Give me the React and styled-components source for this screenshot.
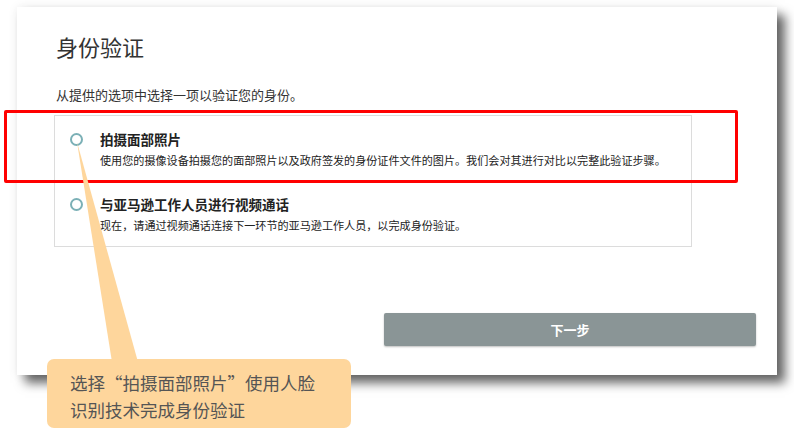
import styled, { createGlobalStyle } from 'styled-components';

const GlobalStyle = createGlobalStyle`
  html, body {
    margin: 0;
    padding: 0;
    background: #ffffff;
  }
  body {
    font-family: "Noto Sans CJK SC", "Noto Sans", "Liberation Sans", sans-serif;
    color: #333333;
  }
`;

const Stage = styled.div`
  position: relative;
  width: 794px;
  height: 441px;
  padding: 7px 0 0 17px;
  box-sizing: border-box;
  overflow: hidden;
`;

const Card = styled.div`
  width: 760px;
  height: 368px;
  box-sizing: border-box;
  background: #ffffff;
  padding: 24px 21px 0 37px;
  display: flex;
  flex-direction: column;
  box-shadow: 8px 8px 10px rgba(0, 0, 0, 0.6), 0 0 10px rgba(0, 0, 0, 0.07);
`;

const Title = styled.h1`
  margin: 0 0 0 2px;
  font-size: 22px;
  line-height: 30px;
  font-weight: 400;
  color: #333333;
`;

const Subtitle = styled.p`
  margin: 24px 0 0 2px;
  font-size: 13px;
  line-height: 20px;
  color: #333333;
`;

const OptionList = styled.div`
  margin-top: 10px;
  width: 638px;
  border: 1px solid #dcdcdc;
  box-sizing: border-box;
  display: flex;
  flex-direction: column;
`;

const Option = styled.label`
  display: flex;
  align-items: flex-start;
  gap: 17px;
  padding: 13px 16px 13px 15px;
  cursor: pointer;
`;

const Radio = styled.span`
  flex-shrink: 0;
  width: 13px;
  height: 13px;
  margin-top: 4px;
  border: 2px solid #7bb0b6;
  border-radius: 50%;
  box-sizing: border-box;
  background: #ffffff;
`;

const OptionText = styled.div`
  display: flex;
  flex-direction: column;
  gap: 3px;
`;

const OptionTitle = styled.div`
  font-size: 13.5px;
  line-height: 20px;
  font-weight: 700;
  color: #222222;
`;

const OptionDesc = styled.div`
  font-size: 11.1px;
  line-height: 16px;
  color: #222222;
`;

const NextButton = styled.button`
  align-self: flex-end;
  margin-top: 66px;
  width: 372px;
  height: 33px;
  border: none;
  border-radius: 2px;
  background: #8a9596;
  color: #ffffff;
  font-family: inherit;
  font-size: 13px;
  font-weight: 700;
  box-shadow: 0 1px 2px rgba(0, 0, 0, 0.25);
`;

const Highlight = styled.div`
  position: absolute;
  left: 4px;
  top: 110px;
  width: 734px;
  height: 73px;
  border: 3px solid #ff0000;
  border-radius: 2px;
  box-sizing: border-box;
  pointer-events: none;
`;

const Pointer = styled.svg`
  position: absolute;
  left: 0;
  top: 0;
  pointer-events: none;
`;

const Callout = styled.div`
  position: absolute;
  left: 47px;
  top: 359px;
  width: 304px;
  height: 69px;
  box-sizing: border-box;
  padding: 10px 0 0 23px;
  background: #fed69c;
  border-radius: 7px;
  font-size: 17.5px;
  line-height: 27px;
  color: #555555;
`;

const options = [
  {
    id: 'photo',
    title: '拍摄面部照片',
    desc: '使用您的摄像设备拍摄您的面部照片以及政府签发的身份证件文件的图片。我们会对其进行对比以完整此验证步骤。',
  },
  {
    id: 'video',
    title: '与亚马逊工作人员进行视频通话',
    desc: '现在，请通过视频通话连接下一环节的亚马逊工作人员，以完成身份验证。',
  },
];

export default function App() {
  return (
    <>
      <GlobalStyle />
      <Stage>
        <Card>
          <Title>身份验证</Title>
          <Subtitle>从提供的选项中选择一项以验证您的身份。</Subtitle>
          <OptionList>
            {options.map((o) => (
              <Option key={o.id}>
                <Radio />
                <OptionText>
                  <OptionTitle>{o.title}</OptionTitle>
                  <OptionDesc>{o.desc}</OptionDesc>
                </OptionText>
              </Option>
            ))}
          </OptionList>
          <NextButton>下一步</NextButton>
        </Card>

        <Highlight />
        <Pointer width="794" height="441" viewBox="0 0 794 441">
          <polygon points="77,142 112,362 138,362" fill="#fed69c" />
        </Pointer>
        <Callout>
          选择“拍摄面部照片”使用人脸
          <br />
          识别技术完成身份验证
        </Callout>
      </Stage>
    </>
  );
}
